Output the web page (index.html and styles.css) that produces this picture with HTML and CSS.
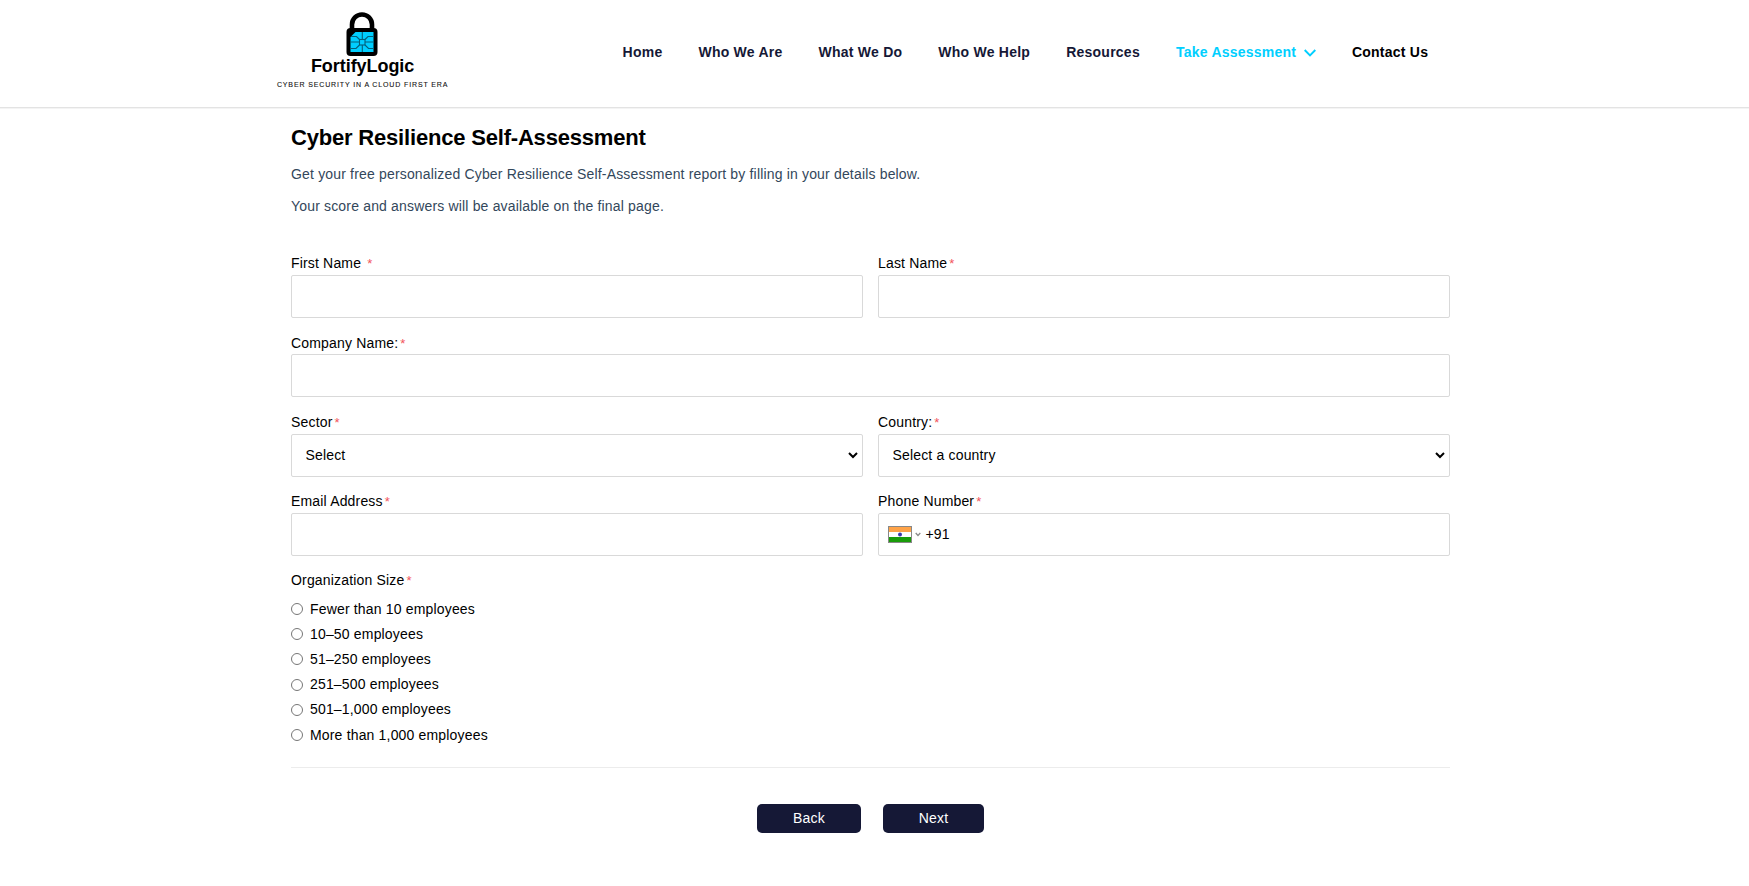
FILE: index.html
```html
<!DOCTYPE html>
<html lang="en">
<head>
<meta charset="utf-8">
<title>Cyber Resilience Self-Assessment</title>
<link rel="stylesheet" href="styles.css">
</head>
<body>
<header class="header">
  <a class="logo">
    <svg class="logo-mark" width="32" height="45" viewBox="0 0 32 45">
      <path d="M6 19V12.500a10 10 0 0 1 20 0v6.500" fill="none" stroke="#000" stroke-width="4.600"/>
      <rect x=".5" y="16" width="31" height="28" rx="4" fill="#000"/>
      <path d="M9.500 20H27.500V40H4.500V25Z" fill="#00cfff"/>
      <g fill="none" stroke="#04607a" stroke-width="1.100">
        <rect x="13.500" y="27.500" width="5.500" height="5.500"/>
        <path d="M16.300 20v7.500M16.300 33v7M4.500 30h9M19 30h8.500M13.500 27.500L10.500 24.500H5M19 27.500L22 24.500H27.500M13.500 33L10 36.500H4.500M19 33L22.500 36.500H27.500"/>
      </g>
    </svg>
    <span class="logo-name">FortifyLogic</span>
    <span class="logo-tag">CYBER SECURITY IN A CLOUD FIRST ERA</span>
  </a>
  <nav class="nav">
    <a>Home</a>
    <a>Who We Are</a>
    <a>What We Do</a>
    <a>Who We Help</a>
    <a>Resources</a>
    <a class="active">Take Assessment
      <svg class="chevron" width="12" height="8" viewBox="0 0 12 8"><path d="M.7 1L6 6.300 11.300 1" fill="none" stroke="currentColor" stroke-width="1.900"/></svg></a>
    <a class="dark">Contact Us</a>
  </nav>
</header>
<main class="main">
  <h1>Cyber Resilience Self-Assessment</h1>
  <p class="intro">Get your free personalized Cyber Resilience Self-Assessment report by filling in your details below.</p>
  <p class="intro">Your score and answers will be available on the final page.</p>
  <form class="form">
    <div class="field"><label>First Name <i>*</i></label><input type="text"></div>
    <div class="field"><label>Last Name<i>*</i></label><input type="text"></div>
    <div class="field wide"><label>Company Name:<i>*</i></label><input type="text"></div>
    <div class="field"><label>Sector<i>*</i></label>
      <div class="select"><select><option>Select</option></select><svg class="arrow" width="10" height="7" viewBox="0 0 10 7"><path d="M1 1L5 5 9 1" fill="none" stroke="#000" stroke-width="2"/></svg></div>
    </div>
    <div class="field"><label>Country:<i>*</i></label>
      <div class="select"><select><option>Select a country</option></select><svg class="arrow" width="10" height="7" viewBox="0 0 10 7"><path d="M1 1L5 5 9 1" fill="none" stroke="#000" stroke-width="2"/></svg></div>
    </div>
    <div class="field"><label>Email Address<i>*</i></label><input type="text"></div>
    <div class="field"><label>Phone Number<i>*</i></label>
      <div class="phone">
        <svg width="24" height="17" viewBox="0 0 24 17">
          <rect width="24" height="17" fill="#888"/>
          <rect x="1" y="1" width="22" height="5" fill="#ffa348"/>
          <rect x="1" y="6" width="22" height="5" fill="#fff"/>
          <rect x="1" y="11" width="22" height="5" fill="#1a9c0a"/>
          <circle cx="12" cy="8.500" r="2" fill="#3a3aa8"/>
        </svg>
        <svg class="caret" width="6" height="5" viewBox="0 0 6 5"><path d="M.7 1L3 3.500 5.300 1" fill="none" stroke="#8a8a8a" stroke-width="1.300"/></svg>
        <span>+91</span>
      </div>
    </div>
    <fieldset class="sizes">
      <legend>Organization Size<i>*</i></legend>
      <label><input type="radio" name="size">Fewer than 10 employees</label>
      <label><input type="radio" name="size">10–50 employees</label>
      <label><input type="radio" name="size">51–250 employees</label>
      <label><input type="radio" name="size">251–500 employees</label>
      <label><input type="radio" name="size">501–1,000 employees</label>
      <label><input type="radio" name="size">More than 1,000 employees</label>
    </fieldset>
  </form>
  <div class="actions">
    <button class="back">Back</button>
    <button class="next">Next</button>
  </div>
</main>
</body>
</html>
```
FILE: styles.css
```css
* { box-sizing: border-box; }
body {
  margin: 0;
  background: #fff;
  color: #000;
  font: 14px/20px "Liberation Sans", Arial, sans-serif;
  letter-spacing: .17px;
}
.header {
  display: flex;
  height: 108px;
  padding-left: 262.6px;
  border-bottom: 1px solid #e3e3e3;
  box-shadow: 0 1px 0 #f4f4f4;
}
.logo {
  display: flex;
  flex-direction: column;
  align-items: center;
  width: 200px;
  padding-top: 12px;
}
.logo-mark { flex: none; margin-left: -1px; }
.logo-name {
  margin-top: -1px;
  font-size: 18px;
  font-weight: 700;
  line-height: 20px;
  letter-spacing: -.05px;
}
.logo-tag {
  margin-top: 4px;
  font-size: 7px;
  line-height: 10px;
  letter-spacing: .87px;
  white-space: nowrap;
  color: #111;
  -webkit-text-stroke: .1px #111;
}
.nav {
  display: flex;
  gap: 36px;
  padding: 42px 0 0 160px;
  font-weight: 700;
  letter-spacing: .24px;
  color: #151836;
  white-space: nowrap;
}
.nav .active { color: #00cfff; }
.nav .dark { color: #000; }
.chevron { margin-left: 3.5px; }
.main {
  width: 1159px;
  margin-left: 291px;
  padding-top: 15.6px;
}
h1 {
  margin: 0 0 12px;
  font-size: 22px;
  line-height: 28px;
  letter-spacing: -.19px;
}
.intro {
  margin: 0 0 12px;
  color: #33475b;
}
.form {
  display: grid;
  grid-template-columns: 1fr 1fr;
  column-gap: 15px;
  row-gap: 14.8px;
  margin-top: 37.6px;
}
.field { display: flex; flex-direction: column; }
.field > label { margin-bottom: 1.6px; }
.wide { grid-column: 1 / -1; }
i {
  margin-left: 2px;
  color: #f2545b;
  font-size: 13px;
  font-style: normal;
  line-height: 1;
}
.field input, .field select, .phone {
  width: 100%;
  height: 43px;
  border: 1px solid #d9d9d9;
  border-radius: 2px;
  background: #fff;
  color: #000;
  font: inherit;
  letter-spacing: inherit;
}
.select { position: relative; height: 43px; }
.field select { appearance: none; padding: 0 13.5px; }
.arrow {
  position: absolute;
  top: 18px;
  right: 5px;
  pointer-events: none;
}
.phone {
  display: flex;
  align-items: center;
  padding-left: 9px;
}
.caret { margin: 0 4.5px 0 3px; }
.sizes {
  grid-column: 1 / -1;
  display: flex;
  flex-direction: column;
  gap: 5.2px;
  margin: -1.2px 0 0;
  padding: 9px 0 22px;
  border: 0;
  border-bottom: 1px solid #ececec;
}
.sizes legend { padding: 0; }
.sizes label { display: flex; align-items: center; }
.sizes input {
  width: 12px;
  height: 12px;
  margin: 1px 7px 0 0;
}
.actions {
  display: flex;
  justify-content: center;
  gap: 22px;
  margin-top: 36px;
}
.actions button {
  height: 29px;
  padding: 0;
  border: 0;
  border-radius: 5px;
  background: #151836;
  color: #fff;
  font: inherit;
  letter-spacing: inherit;
}
.back { width: 104px; }
.next { width: 101px; }
```
